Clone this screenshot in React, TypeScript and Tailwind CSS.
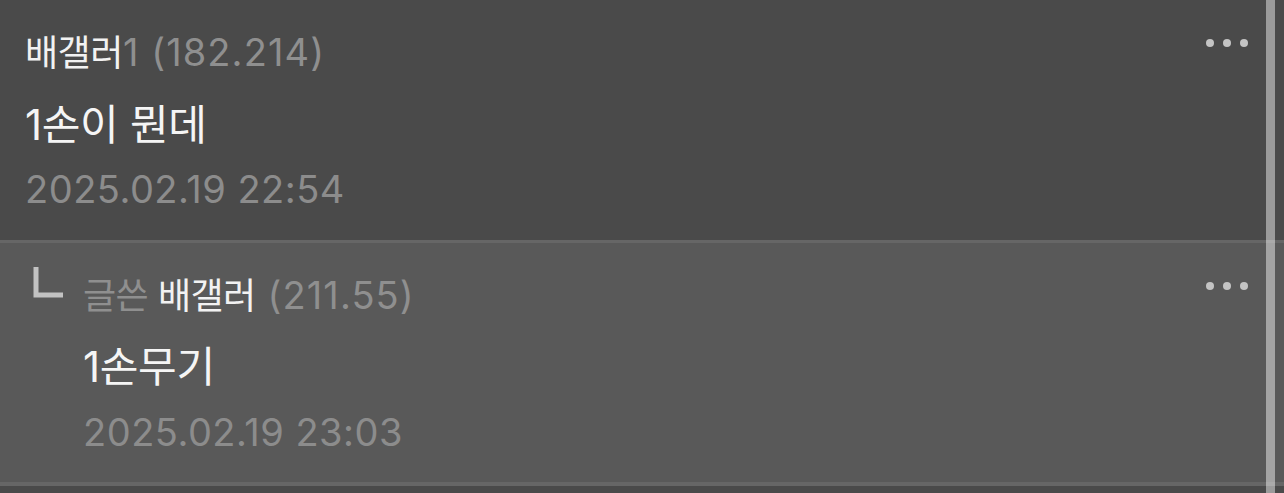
import React from "react";

const font = { fontFamily: 'Inter, "Noto Sans CJK KR", sans-serif' };

const MoreDots: React.FC<{ offset?: string }> = ({ offset = "mt-[9px]" }) => (
  <div className={`flex gap-[9px] ${offset}`}>
    <span className="w-2 h-2 rounded-full bg-[#c4c4c4]" />
    <span className="w-2 h-2 rounded-full bg-[#c4c4c4]" />
    <span className="w-2 h-2 rounded-full bg-[#c4c4c4]" />
  </div>
);

const ReplyIcon: React.FC = () => (
  <svg width="32" height="32" viewBox="0 0 32 32" className="shrink-0">
    <path d="M3 0 V28 H30" fill="none" stroke="#c2c2c2" strokeWidth="5" />
  </svg>
);

export default function App() {
  return (
    <div className="relative w-[1284px] h-[493px] bg-[#4a4a4a] overflow-hidden" style={font}>
      {/* comment */}
      <div className="flex justify-between items-start pl-[25px] pr-9 pt-[30px] pb-[29px] bg-[#4a4a4a]">
        <div className="flex flex-col">
          <div className="text-[36px] leading-[44px] tracking-[-0.5px] whitespace-nowrap">
            <span className="text-[#f2f2f2]">배갤러</span>
            <span className="text-[#8f8f8f] text-[38px] tracking-[1.1px]">1 (182.214)</span>
          </div>
          <div className="mt-[26px] text-[42px] leading-[48px] text-[#f5f5f5] tracking-[-0.3px]">1손이 뭔데</div>
          <div className="mt-[18px] text-[38px] leading-[44px] text-[#8c8c8c] tracking-[0.5px]">2025.02.19 22:54</div>
        </div>
        <MoreDots />
      </div>

      <div className="h-[3px] bg-[#666666]" />

      {/* reply */}
      <div className="flex justify-between items-start pl-[33px] pr-9 pt-[25px] pb-[28px] bg-[#595959]">
        <div className="flex items-start gap-[18px]">
          <div className="mt-[-1px]">
            <ReplyIcon />
          </div>
          <div className="flex flex-col pt-[5px]">
            <div className="text-[36px] leading-[44px] tracking-[-0.5px] whitespace-nowrap">
              <span className="text-[#8f8f8f]">글쓴</span>
              <span className="text-[#f2f2f2]"> 배갤러</span>
              <span className="text-[#8f8f8f] text-[38px] tracking-[1.1px]"> (211.55)</span>
            </div>
            <div className="mt-[25px] text-[42px] leading-[48px] text-[#f5f5f5] tracking-[-0.3px]">1손무기</div>
            <div className="mt-[19px] text-[38px] leading-[44px] text-[#8c8c8c] tracking-[0.5px]">2025.02.19 23:03</div>
          </div>
        </div>
        <MoreDots offset="mt-[14px]" />
      </div>

      <div className="h-1 bg-[#666666]" />

      {/* scrollbar */}
      <div className="absolute top-0 bottom-0 left-[1266px] w-[9px] bg-white/45" />
    </div>
  );
}
